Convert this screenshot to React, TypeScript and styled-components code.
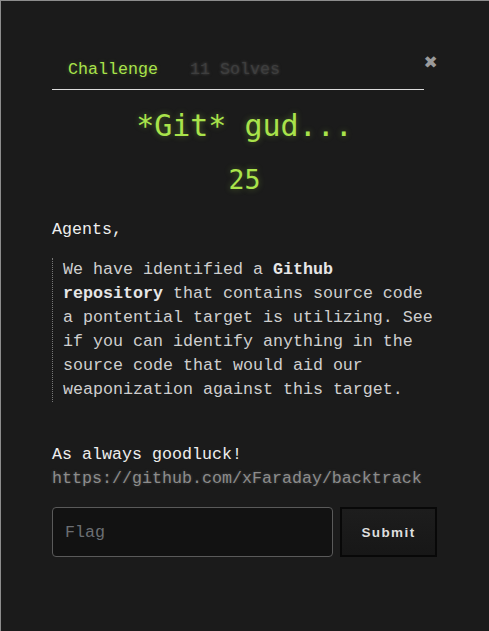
import React from "react";
import styled, { createGlobalStyle } from "styled-components";

const Global = createGlobalStyle`
  html, body { margin: 0; padding: 0; background: #1b1b1b; }
  * { box-sizing: border-box; }
`;

const Modal = styled.div`
  min-height: 631px;
  background: #1b1b1b;
  border-top: 1px solid #8d8d8d;
  border-left: 1px solid #8d8d8d;
  padding: 49px 52px 40px 51px;
  font-family: "Liberation Mono", "DejaVu Sans Mono", monospace;
  font-size: 16.67px;
  color: #e8e8e8;
`;

const Header = styled.div`
  display: flex;
  align-items: flex-start;
`;

const Tabs = styled.nav`
  flex: 1;
  display: flex;
  border-bottom: 1px solid #dcdcdc;
  padding-bottom: 7px;
`;

const Tab = styled.span<{ $active?: boolean }>`
  padding: 8px 16px 0;
  line-height: 24px;
  color: ${(p) => (p.$active ? "#a9e34b" : "#3e3e3e")};
  text-shadow: ${(p) =>
    p.$active ? "0 0 4px rgba(169,227,75,0.25)" : "0 0 3px rgba(90,90,90,0.8)"};
`;

const Close = styled.button`
  width: 13px;
  display: flex;
  justify-content: center;
  background: none;
  border: none;
  padding: 0;
  margin: 4px 0 0 0;
  color: #9a9a9a;
  font-size: 17px;
  line-height: 17px;
  font-family: "DejaVu Sans", sans-serif;
  cursor: pointer;
`;

const Title = styled.h1`
  margin: 18px 0 0;
  text-align: center;
  font-family: "DejaVu Sans Mono", monospace;
  font-weight: normal;
  font-size: 30px;
  line-height: 36px;
  color: #a9e34b;
  text-shadow: 0 0 6px rgba(169, 227, 75, 0.35);
`;

const Points = styled.h2`
  margin: 20px 0 0;
  text-align: center;
  font-family: "DejaVu Sans Mono", monospace;
  font-weight: normal;
  font-size: 26.5px;
  line-height: 32px;
  color: #a9e34b;
  text-shadow: 0 0 6px rgba(169, 227, 75, 0.35);
`;

const Paragraph = styled.p<{ $muted?: boolean }>`
  margin: 0;
  line-height: 24px;
  color: ${(p) => (p.$muted ? "#8c8c8c" : "#eeeeee")};
  text-shadow: ${(p) => (p.$muted ? "0 0 3px rgba(140,140,140,0.4)" : "none")};
`;

const Intro = styled(Paragraph)`
  margin-top: 22px;
`;

const Quote = styled.blockquote`
  margin: 16px 0 0;
  padding: 0 0 0 10px;
  border-left: 1px dotted #777;
  line-height: 24px;
  color: #cfcfcf;
  & strong { color: #e6e6e6; }
`;

const Outro = styled.div`
  margin-top: 41px;
`;

const Form = styled.form`
  display: flex;
  gap: 7px;
  margin-top: 16px;
`;

const Input = styled.input`
  flex: 1;
  height: 50px;
  background: #121212;
  border: 1px solid #5a5a5a;
  border-radius: 4px;
  padding: 0 12px;
  color: #ddd;
  font-family: "Liberation Mono", monospace;
  font-size: 16.67px;
  &::placeholder { color: #6b6e72; }
`;

const Submit = styled.button`
  width: 97px;
  height: 50px;
  background: linear-gradient(#1d1d1d, #171717);
  border: 2px solid #080808;
  color: #dedede;
  font-family: "Liberation Sans", Arial, sans-serif;
  font-weight: bold;
  font-size: 13.5px;
  letter-spacing: 1.4px;
  cursor: pointer;
`;

export default function App() {
  return (
    <>
      <Global />
      <Modal>
        <Header>
          <Tabs>
            <Tab $active>Challenge</Tab>
            <Tab>11 Solves</Tab>
          </Tabs>
          <Close aria-label="close">✖</Close>
        </Header>
        <Title>*Git* gud...</Title>
        <Points>25</Points>
        <Intro>Agents,</Intro>
        <Quote>
          We have identified a <strong>Github repository</strong> that contains
          source code a pontential target is utilizing. See if you can identify
          anything in the source code that would aid our weaponization against
          this target.
        </Quote>
        <Outro>
          <Paragraph>As always goodluck!</Paragraph>
          <Paragraph $muted>https://github.com/xFaraday/backtrack</Paragraph>
        </Outro>
        <Form onSubmit={(e) => e.preventDefault()}>
          <Input placeholder="Flag" />
          <Submit type="submit">Submit</Submit>
        </Form>
      </Modal>
    </>
  );
}
